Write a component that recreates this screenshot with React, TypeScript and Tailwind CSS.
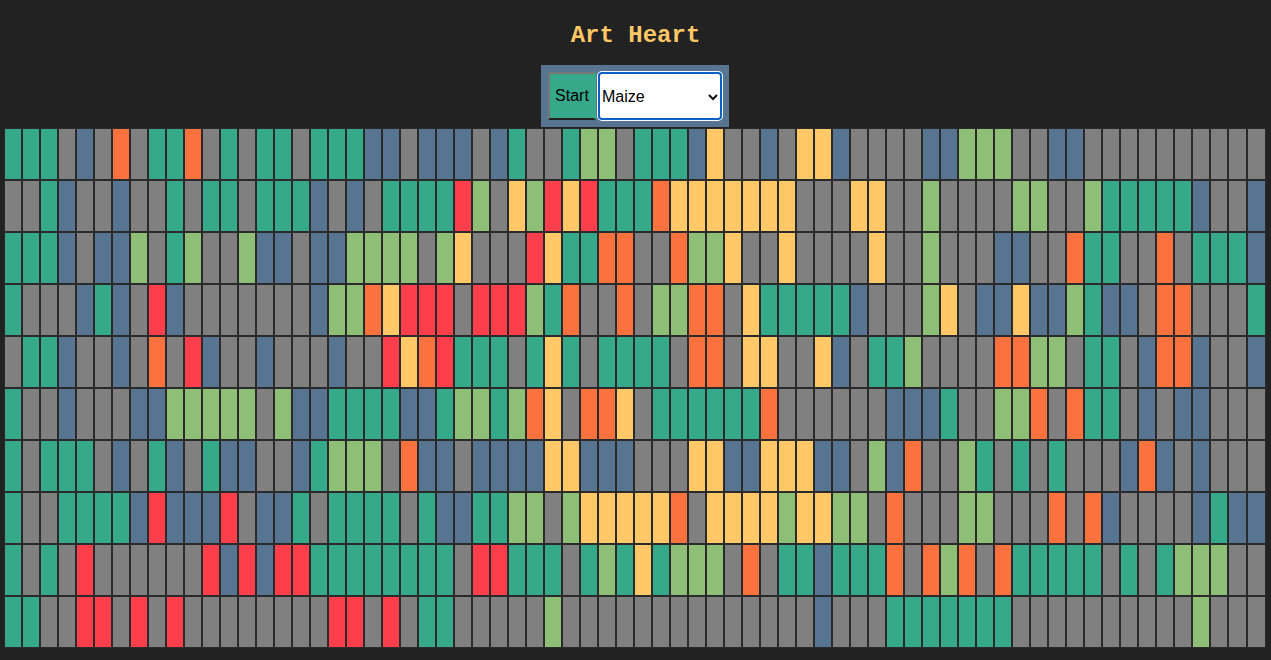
const rows = [
  'tttgbgogttogtgttgtttbbg' + 'bbbgbtggtllgtttbyggbgyyb' + 'ggggbblllggbbgggggggggg',
  'ggtbggbggtgttgtttbgbgtt' + 'ttrlgylryrtttoyyyyyyyggg' + 'yygglggggllggltttttbggb',
  'tttbgbblgtlgglbbgbbllll' + 'glygggryttooggollyggyggg' + 'gygglgggbbggottggogtttb',
  'tgggbtbgrbgggggggblloyr' + 'rrgrrrltoggogllooqyttttt' + 'bggglygbbybbltbbgoogggt',
  'gttbggbgogrbggbgggbggry' + 'ortttgtytgttttgoogyyggyb' + 'gttlggggoollgttgboobggb',
  'tggbgggbblllllglbbttttb' + 'btlltloygooygttttttogggg' + 'ggbbbtggllogottgbgbbggg',
  'tgtttgbgtbgtbbggbtlllgo' + 'bbgbbbbyybbbgggyybbyyybb' + 'glboggltgtgtgggbobgbggg',
  'tggttttbrbbbrgbbtgttttg' + 'tbbttllglyyyyyogyyyylyyl' + 'lgogggllgggogobggggbtbb',
  'tgtgrggggggrbrbrrtttttt' + 'ttgrrtttgtltytlllgogttbt' + 'ttogologotttttgtgtlllgg',
  'ttggrrgrgrggggggggrrgrg' + 'ttgggggl' + 'gggggggggggggg' + 'bg' + 'ggtttttttgggggggggglggg',
]

const colors: Record<string, string> = {
  g: 'bg-[#808080]',
  q: 'bg-[#808080]',
  t: 'bg-[#36a98b]',
  b: 'bg-[#577590]',
  l: 'bg-[#8fbe77]',
  o: 'bg-[#fb723e]',
  y: 'bg-[#fdc865]',
  r: 'bg-[#ff3e4b]',
}

export default function App() {
  return (
    <div className="min-h-[660px] bg-[#222222] pt-[19px]">
      <h1 className="pt-px text-center font-['Liberation_Mono',monospace] text-2xl leading-[32px] font-bold text-[#fdc865]">
        Art Heart
      </h1>
      <div className="mt-[13px] flex justify-center pr-px">
        <div className="flex items-center gap-px bg-[#577590] py-[6px] pr-[6px] pl-[7px]">
          <button className="h-[48px] w-[48px] border-2 border-t-[#767676] border-r-[#36a98b] border-b-[#222222] border-l-[#767676] bg-[#36a98b] p-0 font-['Liberation_Sans',sans-serif] text-base text-black">
            Start
          </button>
          <div className="relative h-[50px] w-[126px] rounded-[5px] bg-white p-px">
            <select className="h-full w-full appearance-none rounded-[4px] border-2 border-[#0a62c4] bg-white pt-px pl-[2px] font-['Liberation_Sans',sans-serif] text-base text-black outline-none">
              <option>Maize</option>
            </select>
            <svg
              className="pointer-events-none absolute top-[22px] right-[5px] h-[8px] w-[10px]"
              viewBox="0 0 10 8"
              fill="none"
              stroke="#111111"
              strokeWidth="2"
            >
              <path d="M1 2l4 4 4-4" />
            </svg>
          </div>
        </div>
      </div>
      <div className="mt-px flex flex-col pl-[4px]">
        {rows.map((row, i) => (
          <div key={i} className="flex">
            {row.split('').map((c, j) => (
              <div
                key={j}
                className={`h-[52px] shrink-0 border border-[#2a2a2a] ${j >= 68 ? 'w-[19px]' : 'w-[18px]'} ${colors[c]}`}
              />
            ))}
          </div>
        ))}
      </div>
    </div>
  )
}
